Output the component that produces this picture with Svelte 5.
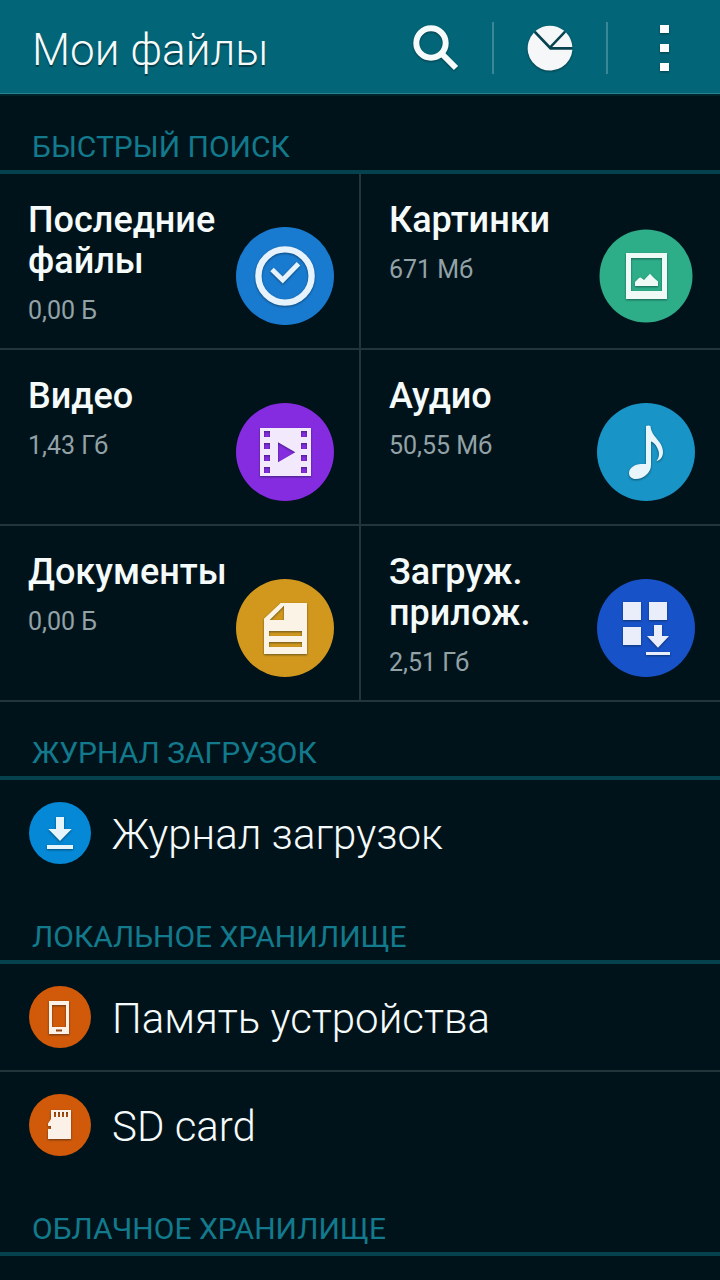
<script>
	const categories = [
		{ id: 'recent', name: 'Последние файлы', size: '0,00 Б', color: '#197bd0' },
		{ id: 'images', name: 'Картинки', size: '671 Мб', color: '#2eae88' },
		{ id: 'video', name: 'Видео', size: '1,43 Гб', color: '#852ce0' },
		{ id: 'audio', name: 'Аудио', size: '50,55 Мб', color: '#1994c6' },
		{ id: 'docs', name: 'Документы', size: '0,00 Б', color: '#d1981d' },
		{ id: 'apps', name: 'Загруж. прилож.', size: '2,51 Гб', color: '#1752c8' }
	];

	const sections = [
		{ title: 'Журнал загрузок', items: [{ id: 'download', name: 'Журнал загрузок', color: '#0588d6' }] },
		{
			title: 'Локальное хранилище',
			items: [
				{ id: 'phone', name: 'Память устройства', color: '#d05a0a' },
				{ id: 'sd', name: 'SD card', color: '#d05a0a' }
			]
		},
		{ title: 'Облачное хранилище', items: [] }
	];
</script>

<header>
	<h1>Мои файлы</h1>
	<button aria-label="Поиск">
		<svg width="56" height="56" viewBox="0 0 56 56">
			<circle cx="23" cy="23" r="14.7" fill="none" stroke="#f5fafb" stroke-width="6" />
			<path d="M33 33L48 48" stroke="#f5fafb" stroke-width="6" />
		</svg>
	</button>
	<button aria-label="Использование памяти">
		<svg width="56" height="56" viewBox="0 0 56 56">
			<circle cx="28" cy="28" r="21.5" fill="#07434f" />
			<path d="M28 29.700H50.400A22.400 22.400 0 1 1 11.800 12.800Z" fill="#f5f7f8" />
			<path d="M13.600 10.800A22.400 22.400 0 0 1 42.200 10.800L28 25.800Z" fill="#f5f7f8" />
			<path d="M44 12.600A22.400 22.400 0 0 1 50.300 27H30.200Z" fill="#f5f7f8" />
		</svg>
	</button>
	<button aria-label="Меню">
		<svg width="56" height="56" viewBox="0 0 56 56">
			<path d="M24 5h9v8h-9zM24 24h9v8h-9zM24 43h9v8h-9z" fill="#fff" />
		</svg>
	</button>
</header>

<main>
	<h2>Быстрый поиск</h2>
	<div class="grid">
		{#each categories as cat}
			<button class="tile">
				<span class="info">
					<span class="name">{cat.name}</span>
					<span class="size">{cat.size}</span>
				</span>
				<svg class="icon" viewBox="0 0 98 98" aria-hidden="true">
					<circle cx="49" cy="49" r={cat.id === 'images' ? 46.5 : 49} fill={cat.color} />
					<g class="glyph">
						{#if cat.id === 'recent'}
							<circle cx="49" cy="49" r="26.6" fill="none" stroke="#e6f2fc" stroke-width="6.4" />
							<path d="M36 42.5L46.7 53L62.5 36.8" fill="none" stroke="#e6f2fc" stroke-width="5" />
						{:else if cat.id === 'images'}
							<path fill="#effaf6" fill-rule="evenodd" d="M29 26H70V72H29ZM34 31V64H65V31Z" />
							<path fill="#effaf6" d="M38 59V55L42 51Q43.500 50 45 51.500L47 53L53 46.700L57 51L61 54.500V59Z" />
						{:else if cat.id === 'video'}
							<path
								fill="#f3e9fc"
								fill-rule="evenodd"
								d="M24 25H75V73H24ZM28 28v6h6v-6zM28 40v6h6v-6zM28 52v6h6v-6zM28 64v6h6v-6zM65 28v6h6v-6zM65 40v6h6v-6zM65 52v6h6v-6zM65 64v6h6v-6zM42 39.300V59.300L59.300 49.300Z"
							/>
						{:else if cat.id === 'audio'}
							<path
								fill="#e8f5fb"
								d="M49 23Q51.500 22 53.500 23C54 34 66 38 66 49C66 54 63 57.500 59.500 58C62 55 63 51 61 46.500C59.500 42 56 39 54 38.500V62C54 70 46 76 39 76C34.500 76 32 73.500 32 70C32 65 38 61 44 61H49Z"
							/>
						{:else if cat.id === 'docs'}
							<path
								fill="#fbf4e6"
								fill-rule="evenodd"
								d="M28 39.700L44.700 24H71V75H28ZM48 26.700L33.700 41H48ZM33 52V57H66V52ZM33 63V68H66V63Z"
							/>
						{:else}
							<path
								fill="#e9eefa"
								d="M26 23h18v18h-18zM52 23h18v18h-18zM26 48h18v18h-18zM57 46h8v11h7L61 68.700L50 57h7zM49 73h24v3h-24z"
							/>
						{/if}
					</g>
				</svg>
			</button>
		{/each}
	</div>

	{#each sections as section}
		<h2>{section.title}</h2>
		<ul>
			{#each section.items as item}
				<li>
					<button class="row">
						<svg width="62" height="62" viewBox="0 0 62 62" aria-hidden="true">
							<circle cx="31" cy="31" r="31" fill={item.color} />
							<g class="glyph">
								{#if item.id === 'download'}
									<path fill="#e6f4fc" d="M27 15h8v12h7.700L31 39L19.300 27H27zM18 43h26v4h-26z" />
								{:else if item.id === 'phone'}
									<path
										fill="#fcf1e9"
										fill-rule="evenodd"
										d="M20 15H40V48H20ZM23 19V41H37V19ZM27 43.500v2h6v-2z"
									/>
								{:else}
									<path
										fill="#fcf1e9"
										fill-rule="evenodd"
										d="M22 16H42V45H19V35H22V32H19V29.500L22 25ZM25 18v5h2v-5zM29 18v5h2v-5zM33 18v5h2v-5zM37 18v5h2v-5z"
									/>
								{/if}
							</g>
						</svg>
						<span>{item.name}</span>
					</button>
				</li>
			{/each}
		</ul>
	{/each}
</main>

<style>
	:global(body) {
		margin: 0;
		min-height: 100vh;
		background: #00131a;
		font-family: Roboto, 'Noto Sans', sans-serif;
	}
	button {
		margin: 0;
		padding: 0;
		border: 0;
		background: none;
		color: inherit;
		font: inherit;
		cursor: pointer;
	}
	header {
		display: flex;
		align-items: center;
		box-sizing: border-box;
		height: 96px;
		padding: 2px 0 0 32px;
		background: #036678;
		border-bottom: 2px solid #02242d;
		box-shadow: inset 0 -1px #2b8290;
		color: #f5fafb;
	}
	h1 {
		flex: 1;
		margin: 0;
		padding-top: 4px;
		font-size: 44px;
		font-weight: 300;
		line-height: 52px;
		text-shadow: 0 2px 1px rgba(0, 30, 40, 0.6);
	}
	header button {
		display: flex;
		justify-content: center;
		align-items: center;
		width: 112px;
		height: 52px;
	}
	header button + button {
		border-left: 2px solid #3a8796;
		width: 114px;
	}
	header svg,
	.glyph {
		filter: drop-shadow(0 1px 1px rgba(0, 20, 30, 0.5));
	}
	h2 {
		margin: 0;
		padding: 33px 32px 5px;
		border-bottom: 4px solid #05424d;
		color: #127a8c;
		font-size: 30px;
		font-weight: 400;
		line-height: 36px;
		text-transform: uppercase;
	}
	.grid {
		display: grid;
		grid-template-columns: 1fr 1fr;
	}
	.tile {
		display: flex;
		justify-content: space-between;
		box-sizing: border-box;
		height: 176px;
		padding: 26px 25px 0 28px;
		border-bottom: 2px solid #22353b;
		text-align: left;
	}
	.tile:nth-child(odd) {
		border-right: 1px solid #22353b;
	}
	.tile:nth-child(even) {
		border-left: 1px solid #22353b;
	}
	.info {
		flex: 1;
		width: 0;
	}
	.name {
		display: block;
		color: #f5fafb;
		font-size: 36px;
		font-weight: 500;
		line-height: 41px;
	}
	.size {
		display: block;
		margin-top: 12px;
		color: #93a2a7;
		font-size: 25px;
		font-weight: 400;
		line-height: 34px;
	}
	.icon {
		flex: none;
		width: 98px;
		height: 98px;
		margin-top: 27px;
	}
	ul {
		margin: 0;
		padding: 0;
		list-style: none;
	}
	li + li {
		border-top: 2px solid #22353b;
	}
	.row {
		display: flex;
		align-items: center;
		gap: 21px;
		width: 100%;
		height: 106px;
		padding: 0 29px;
		color: #f5fafb;
		font-size: 42px;
		font-weight: 300;
		text-align: left;
	}
	.row span {
		padding-top: 2px;
	}
</style>
